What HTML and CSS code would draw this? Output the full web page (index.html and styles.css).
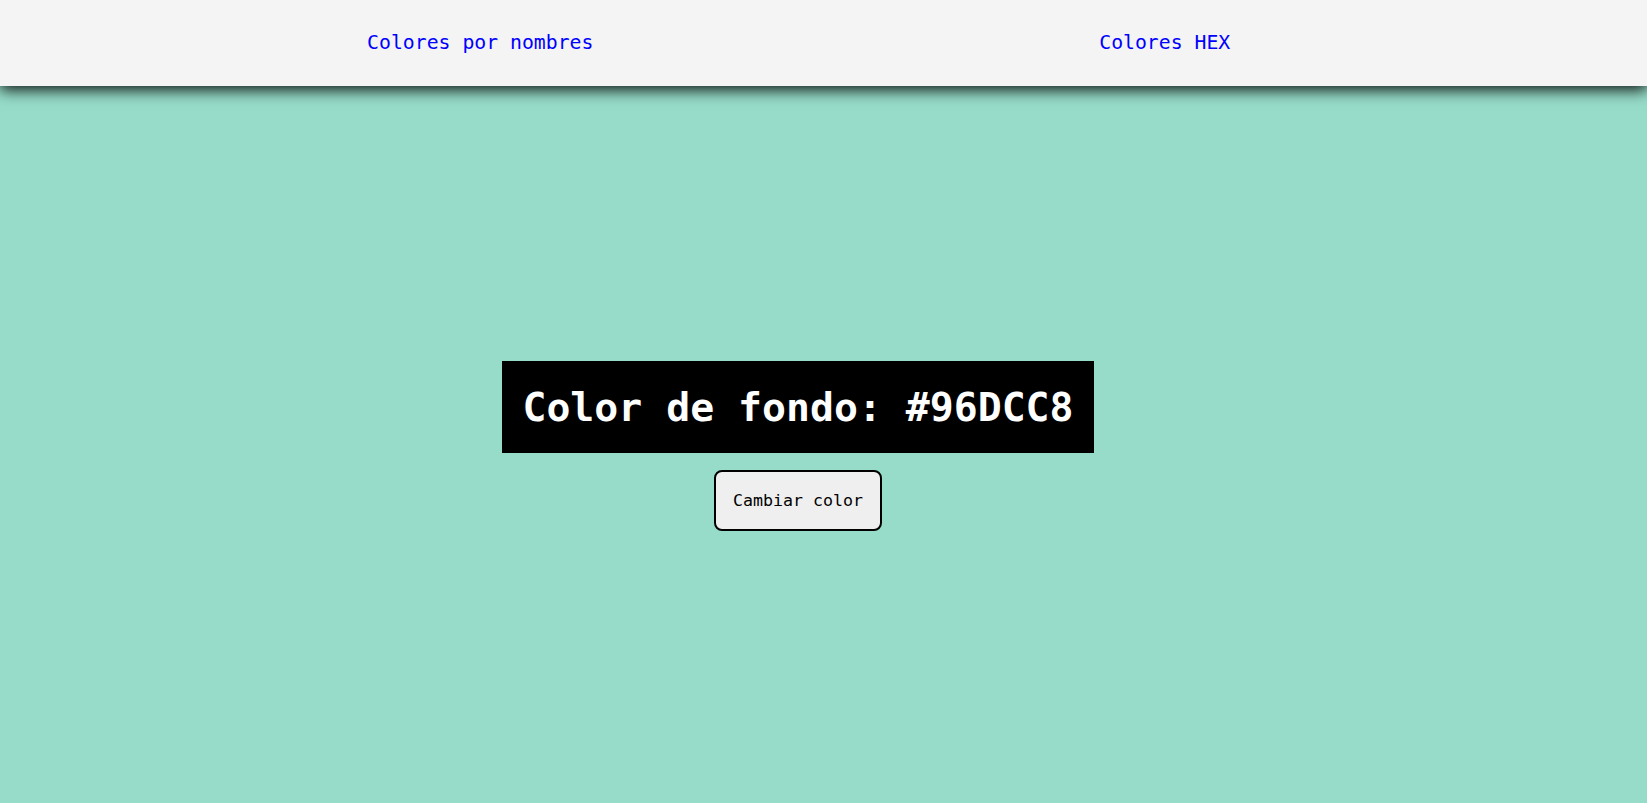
FILE: index.html
```html
<!DOCTYPE html>
<html lang="es">
<head>
<meta charset="utf-8">
<title>Color de fondo</title>
<link rel="stylesheet" href="styles.css">
</head>
<body>
  <nav class="nav">
    <a class="nav-link" href="#">Colores por nombres</a>
    <a class="nav-link" href="#">Colores HEX</a>
  </nav>
  <main class="main">
    <h1 class="title">Color de fondo: #96DCC8</h1>
    <button class="btn" type="button">Cambiar color</button>
  </main>
</body>
</html>
```

FILE: styles.css
```css
* {
  box-sizing: border-box;
}

html, body {
  margin: 0;
  padding: 0;
}

body {
  background: #96dcc8;
  font-family: "DejaVu Sans Mono", "Liberation Mono", monospace;
  min-height: 100vh;
  overflow: hidden;
}

.nav {
  position: relative;
  z-index: 1;
  height: 86px;
  background: #f4f4f4;
  display: grid;
  grid-template-columns: 1fr 1fr;
  align-items: center;
  justify-items: center;
  padding: 0 140px 0 138px;
  box-shadow: 0 4px 14px rgba(0, 0, 0, 0.9);
}

.nav-link {
  color: #0000ff;
  text-decoration: none;
  font-size: 19.8px;
  line-height: 24px;
}

.main {
  height: calc(100vh - 86px);
  display: flex;
  flex-direction: column;
  align-items: center;
  justify-content: center;
  gap: 17px;
  padding: 2px 51px 0 0;
}

.title {
  margin: 0;
  background: #000;
  color: #fff;
  font-size: 39.8px;
  font-weight: bold;
  line-height: 52px;
  padding: 20px 20px;
  white-space: nowrap;
}

.btn {
  font-family: inherit;
  font-size: 16.6px;
  line-height: 21px;
  color: #000;
  background: #efefef;
  border: 2px solid #000;
  border-radius: 8px;
  padding: 18px 17px;
  cursor: pointer;
}
```
